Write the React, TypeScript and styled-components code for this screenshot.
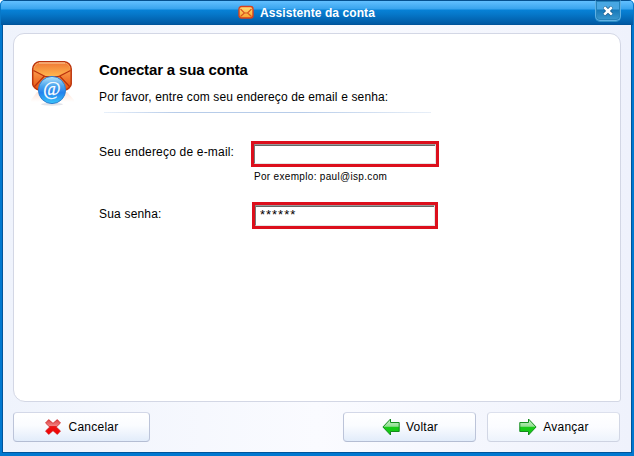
import React from "react";
import styled, { createGlobalStyle } from "styled-components";

const GlobalStyle = createGlobalStyle`
  * { box-sizing: border-box; }
  body { margin: 0; background: #fff; font-family: "Liberation Sans", Arial, sans-serif; color: #000; overflow: hidden; }
`;

const Dialog = styled.main`
  width: 634px;
  height: 456px;
  display: flex;
  flex-direction: column;
  border-radius: 5px 5px 0 0;
  overflow: hidden;
  background: #0078d0;
`;

const TitleBar = styled.header`
  flex: none;
  height: 25px;
  display: grid;
  grid-template-columns: 238px 1fr 26px;
  padding-right: 13px;
  border-radius: 5px 5px 0 0;
  box-shadow: inset 1px 0 #0878c8, inset -1px 0 #0878c8;
  background: linear-gradient(#05508f 0 1px, #62c0ff 1px, #38a4ee 9px, #0781d6 10px, #0678ca 14px, #0059a3 24px, #00529a 25px);
`;

const Title = styled.h1`
  grid-column: 2;
  margin: 0;
  display: flex;
  align-items: flex-start;
  gap: 6px;
  padding-top: 5px;
  color: #fff;
  font: bold 12px/16px "Liberation Sans", Arial, sans-serif;
  letter-spacing: 0.08px;
  white-space: pre;
`;

const CloseButton = styled.button`
  grid-column: 3;
  height: 21px;
  padding: 1px 0 0;
  display: flex;
  align-items: center;
  justify-content: center;
  border: 1px solid #5fb0e3;
  border-top-color: #05508f;
  border-radius: 0 0 5px 5px;
  box-shadow: 0 1px #2d8fc6, inset 0 0 0 1px #2583bb;
  background: linear-gradient(#48a7e3 0 8px, #1678b8 9px, #3c99cf 19px);
`;

const Body = styled.div`
  flex: 1;
  margin: 0 3px 4px;
  padding: 8px 10px 0;
  display: flex;
  flex-direction: column;
  gap: 10px;
  box-shadow: 0 0 0 1px #00549b;
  background: linear-gradient(90deg, #eff3fc, #fafbff 50%, #eff2fc);
`;

const Panel = styled.section`
  height: 369px;
  width: 608px;
  padding: 26px 17px;
  display: grid;
  grid-template-columns: 68px 1fr;
  align-items: start;
  border: 1px solid #d3d7e5;
  border-radius: 11px 11px 3px 12px;
  background: #fff;
`;

const Content = styled.div`
  display: flex;
  flex-direction: column;
`;

const Heading = styled.h2`
  margin: 0;
  font: bold 15px/20px "Liberation Sans", Arial, sans-serif;
  letter-spacing: -0.15px;
  white-space: nowrap;
`;

const Intro = styled.p`
  margin: 9px 0 0;
  font-size: 12px;
  line-height: 16px;
  letter-spacing: 0.14px;
  white-space: nowrap;
`;

const Divider = styled.div`
  width: 327px;
  height: 1px;
  margin: 7px 0 28px 5px;
  background: linear-gradient(90deg, #e8f0fa, #b7cce9 22%, #b7cce9 60%, #e8eff8);
`;

const Field = styled.div<{ $inset: number; $labelTop: number }>`
  display: grid;
  grid-template-columns: ${(p) => p.$inset}px auto;
  & > label { padding-top: ${(p) => p.$labelTop}px; }
`;

const Label = styled.label`
  font-size: 12px;
  line-height: 16px;
  letter-spacing: 0.19px;
  white-space: nowrap;
`;

const InputFrame = styled.div<{ $w: number; $h: number }>`
  width: ${(p) => p.$w}px;
  height: ${(p) => p.$h}px;
  display: flex;
  border: 3px solid #dc0f1c;
`;

const Input = styled.input`
  flex: 1;
  min-width: 0;
  padding: 0 0 2px 4px;
  border: 1px solid;
  border-color: #999 #e4e4e4 #e4e4e4 #777;
  outline: 0;
  background: #fff;
  box-shadow: inset 0 1px #666;
  color: #000;
  font: 13px/18px "Liberation Sans", Arial, sans-serif;
  letter-spacing: 0.98px;
`;

const Hint = styled.div`
  margin: 4px 0 19px 155px;
  font-size: 10px;
  line-height: 12px;
  letter-spacing: 0.32px;
  white-space: nowrap;
`;

const Actions = styled.footer`
  display: flex;
  gap: 11px;
  width: 607px;
`;

const ActionButton = styled.button<{ $w: number; $gap: number; $soft?: boolean; $start?: boolean }>`
  width: ${(p) => p.$w}px;
  height: 30px;
  margin-right: ${(p) => (p.$start ? "auto" : "0")};
  padding: 0 0 1px 1px;
  display: flex;
  align-items: center;
  justify-content: center;
  gap: ${(p) => p.$gap}px;
  border: 1px solid;
  border-color: ${(p) => (p.$soft ? "#dce0ed #d2d7e5 #ced3e2" : "#d3d8e8 #bcc4d9 #b4bdd3")};
  border-radius: 4px;
  background: linear-gradient(#fff 0, ${(p) => (p.$soft ? "#fbfcff 50%, #edf3fc" : "#fafcff 45%, #e2ecfa")} 100%);
  color: #000;
  font: 12px/16px "Liberation Sans", Arial, sans-serif;
  letter-spacing: 0.25px;
`;

const Icon = styled.svg`
  display: block;
  flex: none;
`;

const SmallMail = () => (
  <Icon width="16" height="14" viewBox="0 0 16 14">
    <defs><linearGradient id="sm" x2="0" y2="1"><stop stopColor="#ffe07a" /><stop offset="1" stopColor="#f8a02c" /></linearGradient></defs>
    <rect x="1" y="1.5" width="14" height="11.5" rx="2.5" fill="url(#sm)" stroke="#d8401c" strokeWidth="1.4" />
    <path d="M2.5 4 6.5 8 2.5 11.5M13.5 4 9.5 8 13.5 11.5M6.5 8H9.5" fill="none" stroke="#d9531d" strokeWidth="1.1" />
  </Icon>
);

const AccountIcon = () => (
  <Icon width="46" height="50" viewBox="0 0 46 50">
    <defs>
      <linearGradient id="env" x2="0" y2="1"><stop stopColor="#ffbd72" /><stop offset=".35" stopColor="#fa9646" /><stop offset="1" stopColor="#e65010" /></linearGradient>
      <linearGradient id="flap" x2="0" y2="1"><stop stopColor="#f07b35" /><stop offset="1" stopColor="#ffb54e" /></linearGradient>
      <linearGradient id="ball" x2="0" y2="1"><stop stopColor="#b4e3fb" /><stop offset=".35" stopColor="#4da5ee" /><stop offset=".6" stopColor="#2482ed" /><stop offset="1" stopColor="#38c5fa" /></linearGradient>
      <linearGradient id="refl" x2="0" y2="1"><stop stopColor="#ffe5d9" /><stop offset="1" stopColor="#fff" /></linearGradient>
    </defs>
    <path d="M0 40 6 32H36L43 40V42H0Z" fill="url(#refl)" />
    <path d="M8 1.7H33.5C37 1.7 40.2 5.5 40.2 9V24C40.2 27 36 30 34 30H8C5 30 1.7 26 1.7 24V9C1.7 5.5 5 1.7 8 1.7Z" fill="url(#env)" stroke="#bd350d" strokeWidth="1.5" />
    <path d="M3 10C3 6 6 3 9 3H33C36 3 39 6 39 10L26 16H15Z" fill="url(#flap)" />
    <path d="M2.5 10.5 14 16.5H28L39.5 10.5M3.5 26.5 13 16.5M38.5 26.5 29 16.5" fill="none" stroke="#b9310d" strokeWidth="1.2" />
    <path d="M8 3H34" stroke="#ffd0a0" strokeWidth="1" />
    <ellipse cx="21" cy="44.2" rx="11" ry="1.5" fill="#e1e3e9" />
    <circle cx="21" cy="30" r="13.6" fill="url(#ball)" stroke="#2f7fce" strokeWidth="1" />
    <text x="20.8" y="34.5" textAnchor="middle" fontFamily="Liberation Serif, serif" fontStyle="italic" fontSize="19" fill="#fff" stroke="#fff" strokeWidth=".25">@</text>
  </Icon>
);

const CancelIcon = () => (
  <Icon width="16" height="16" viewBox="0 0 16 16">
    <defs><linearGradient id="red" x2="0" y2="1"><stop stopColor="#d94444" /><stop offset=".42" stopColor="#f28080" /><stop offset=".47" stopColor="#e81515" /><stop offset="1" stopColor="#f50000" /></linearGradient></defs>
    <path d="M3.7 .6 8 4.3 12.3 .6 15.5 4 11.3 8 15.5 12 12.3 15.4 8 11.7 3.7 15.4.5 12 4.7 8 .5 4Z" fill="url(#red)" stroke="#d01c1c" strokeWidth=".7" />
  </Icon>
);

const ArrowIcon = ({ forward = false }: { forward?: boolean }) => (
  <Icon width="18" height="18" viewBox="0 0 18 18">
    <defs><linearGradient id={forward ? "gr" : "gl"} x2="0" y2="1"><stop stopColor="#c9f4c9" /><stop offset=".46" stopColor="#93df93" /><stop offset=".5" stopColor="#18cb18" /><stop offset="1" stopColor="#12c912" /></linearGradient></defs>
    <path transform={forward ? "translate(18 0) scale(-1 1)" : undefined} d="M.9 9 8.5 1V4.5H17.2V13.5H8.5V17Z" fill={forward ? "url(#gr)" : "url(#gl)"} stroke="#138c1c" strokeWidth="1" />
  </Icon>
);

export default function App() {
  return (
    <>
      <GlobalStyle />
      <Dialog>
        <TitleBar>
          <Title><SmallMail />Assistente da conta</Title>
          <CloseButton aria-label="Fechar">
            <Icon width="10" height="10" viewBox="0 0 10 10"><path d="M1 1 9 8.8M9 1 1 8.8" stroke="#15598b" strokeWidth="4" /><path d="M1.2 1.2 8.8 8.6M8.8 1.2 1.2 8.6" stroke="#fff" strokeWidth="2.6" /></Icon>
          </CloseButton>
        </TitleBar>
        <Body>
          <Panel>
            <AccountIcon />
            <Content>
              <Heading>Conectar a sua conta</Heading>
              <Intro>Por favor, entre com seu endereço de email e senha:</Intro>
              <Divider />
              <Field $inset={152} $labelTop={3}>
                <Label htmlFor="email">Seu endereço de e-mail:</Label>
                <InputFrame $w={188} $h={26}><Input id="email" /></InputFrame>
              </Field>
              <Hint>Por exemplo: paul@isp.com</Hint>
              <Field $inset={153} $labelTop={4}>
                <Label htmlFor="password">Sua senha:</Label>
                <InputFrame $w={186} $h={27}><Input id="password" defaultValue="******" /></InputFrame>
              </Field>
            </Content>
          </Panel>
          <Actions>
            <ActionButton $w={137} $gap={7} $start><CancelIcon />Cancelar</ActionButton>
            <ActionButton $w={133} $gap={6}><ArrowIcon />Voltar</ActionButton>
            <ActionButton $w={133} $gap={6} $soft><ArrowIcon forward />Avançar</ActionButton>
          </Actions>
        </Body>
      </Dialog>
    </>
  );
}
